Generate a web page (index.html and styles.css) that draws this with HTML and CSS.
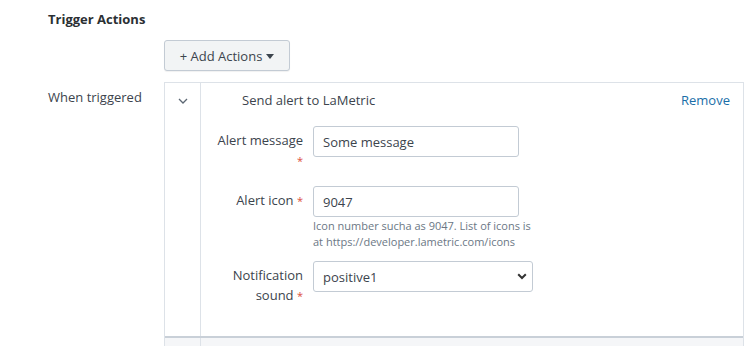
FILE: index.html
```html
<!DOCTYPE html>
<html lang="en">
  <head>
    <meta charset="UTF-8" />
    <title>Trigger Actions</title>
    <link rel="stylesheet" href="styles.css">
  </head>
  <body>
    <div class="panel">
      <h2 class="panel-title">Trigger Actions</h2>

      <div class="field-row">
        <div class="field-label"></div>
        <button class="add-button" type="button">
          + Add Actions <span class="caret"></span>
        </button>
      </div>

      <div class="field-row field-row-actions">
        <div class="field-label">When triggered</div>
        <div class="actions-table">
          <div class="action-row">
            <div class="action-toggle">
              <svg width="10" height="6" viewBox="0 0 10 6">
                <path d="M1 1l4 4 4-4" fill="none" stroke="#5c6773" stroke-width="1.3" />
              </svg>
            </div>
            <div class="action-body">
              <div class="action-header">
                <span class="action-name">Send alert to LaMetric</span>
                <a class="action-remove" href="#">Remove</a>
              </div>

              <div class="form-row">
                <label class="form-label">Alert message <span class="required">*</span></label>
                <div class="form-control">
                  <input class="text-input" type="text" value="Some message" />
                </div>
              </div>

              <div class="form-row form-row-icon">
                <label class="form-label">Alert icon <span class="required">*</span></label>
                <div class="form-control">
                  <input class="text-input" type="text" value="9047" />
                  <p class="help-text">Icon number sucha as 9047. List of icons is at https://developer.lametric.com/icons</p>
                </div>
              </div>

              <div class="form-row form-row-sound">
                <label class="form-label">Notification sound <span class="required">*</span></label>
                <div class="form-control">
                  <div class="select-wrap">
                    <select class="select-input">
                      <option>positive1</option>
                    </select>
                    <svg class="select-arrow" width="10" height="7" viewBox="0 0 10 7">
                      <path d="M1.2 1.2l3.8 3.8 3.8-3.8" fill="none" stroke="#333" stroke-width="2" />
                    </svg>
                  </div>
                </div>
              </div>
            </div>
          </div>
          <div class="action-row action-row-empty">
            <div class="action-toggle"></div>
            <div class="action-body"></div>
          </div>
        </div>
      </div>
    </div>
  </body>
</html>
```

FILE: styles.css
```css
:root {
  --text: #3c444d;
  --text-muted: #6b7785;
  --border: #dde2e8;
  --input-border: #c3cbd4;
  --link: #1a6ea8;
  --required: #dc4e41;
}

* {
  margin: 0;
  padding: 0;
  box-sizing: border-box;
}

body {
  font-family: "Open Sans", "Lato", sans-serif;
  font-size: 13px;
  color: var(--text);
  background: #fff;
  overflow: hidden;
}

.panel {
  padding: 11px 0 0 48px;
}

.panel-title {
  font-size: 13px;
  font-weight: 700;
  color: #2b3033;
  line-height: 16px;
  margin-bottom: 13px;
}

.field-row {
  display: flex;
}

.field-label {
  width: 116px;
  flex-shrink: 0;
  line-height: 18px;
}

.field-row-actions {
  margin-top: 11px;
}

.field-row-actions .field-label {
  padding-top: 6px;
}

.add-button {
  font-family: inherit;
  font-size: 13px;
  color: var(--text);
  background: #f2f4f5;
  border: 1px solid var(--input-border);
  border-radius: 3px;
  width: 126px;
  height: 31px;
  display: inline-flex;
  align-items: center;
  justify-content: center;
  gap: 4px;
  box-shadow: 0 1px 1px rgba(0, 0, 0, 0.06);
}

.caret {
  width: 0;
  height: 0;
  border-left: 4px solid transparent;
  border-right: 4px solid transparent;
  border-top: 5px solid #3c444d;
  margin-top: 1px;
}

.actions-table {
  width: 580px;
  border: 1px solid var(--border);
  border-bottom: none;
}

.action-row {
  display: flex;
}

.action-row + .action-row {
  border-top: 2px solid #c9d0d8;
}

.action-toggle {
  width: 36px;
  flex-shrink: 0;
  border-right: 1px solid var(--border);
  display: flex;
  justify-content: center;
  padding-top: 15px;
}

.action-toggle svg {
  display: block;
}

.action-body {
  flex: 1;
  padding-bottom: 31px;
}

.action-row-empty {
  height: 10px;
  background: #f5f6f8;
}

.action-row-empty .action-body {
  padding: 0;
}

.action-header {
  display: flex;
  justify-content: space-between;
  padding: 8px 13px 0 41px;
  line-height: 18px;
}

.action-name {
  color: var(--text);
}

.action-remove {
  color: var(--link);
  text-decoration: none;
}

.form-row {
  display: flex;
  gap: 10px;
  margin-top: 17px;
}

.form-row-icon {
  margin-top: 16px;
}

.form-row-sound {
  margin-top: 11px;
}

.form-label {
  width: 102px;
  flex-shrink: 0;
  text-align: right;
  line-height: 20px;
  padding: 4px 0 0 12px;
}

.required {
  color: var(--required);
  font-size: 11px;
  line-height: 1;
}

.text-input {
  display: block;
  width: 206px;
  height: 31px;
  border: 1px solid var(--input-border);
  border-radius: 3px;
  padding: 0 9px;
  font-family: inherit;
  font-size: 13px;
  color: var(--text);
  background: #fff;
}

.help-text {
  font-size: 11px;
  line-height: 16px;
  color: var(--text-muted);
  margin-top: 1px;
  width: 223px;
}

.select-wrap {
  position: relative;
  width: 220px;
}

.select-input {
  display: block;
  width: 220px;
  height: 31px;
  border: 1px solid var(--input-border);
  border-radius: 3px;
  padding: 0 9px;
  font-family: inherit;
  font-size: 13px;
  color: var(--text);
  background: #fff;
  appearance: none;
}

.select-arrow {
  position: absolute;
  right: 6px;
  top: 12px;
  pointer-events: none;
}
```
